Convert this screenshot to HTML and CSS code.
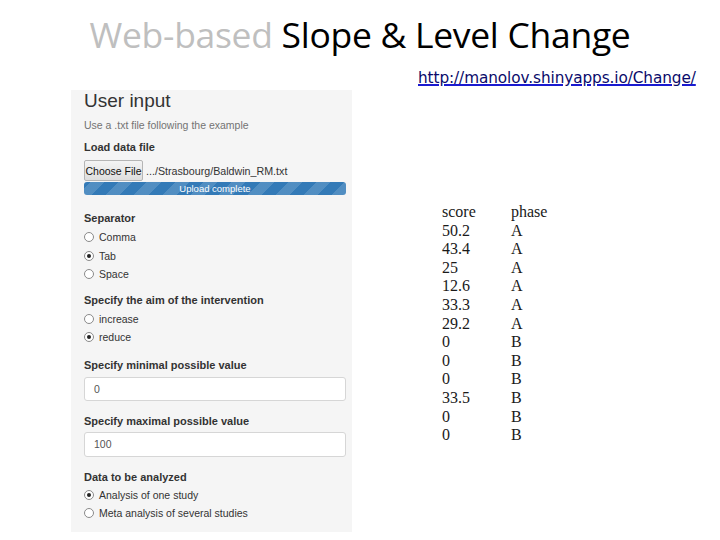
FILE: index.html
```html
<!DOCTYPE html>
<html>
<head>
<meta charset="utf-8">
<link rel="stylesheet" href="styles.css">
</head>
<body>
<div class="slide">
  <h1 class="title"><span class="muted">Web-based</span> Slope &amp; Level Change</h1>
  <div class="content">
    <div class="panel">
      <h2 class="panel-title">User input</h2>
      <p class="help">Use a .txt file following the example</p>
      <div class="label lbl-load">Load data file</div>
      <div class="file-row">
        <span class="file-btn">Choose File</span>
        <span class="file-name">.../Strasbourg/Baldwin_RM.txt</span>
      </div>
      <div class="progress">Upload complete</div>

      <div class="label lbl-sep">Separator</div>
      <div class="radios">
        <div class="radio"><span class="dot"></span>Comma</div>
        <div class="radio"><span class="dot on"></span>Tab</div>
        <div class="radio"><span class="dot"></span>Space</div>
      </div>

      <div class="label lbl-aim">Specify the aim of the intervention</div>
      <div class="radios">
        <div class="radio"><span class="dot"></span>increase</div>
        <div class="radio"><span class="dot on"></span>reduce</div>
      </div>

      <div class="label lbl-min">Specify minimal possible value</div>
      <div class="input in-min">0</div>

      <div class="label lbl-max">Specify maximal possible value</div>
      <div class="input in-max">100</div>

      <div class="label lbl-data">Data to be analyzed</div>
      <div class="radios radios-data">
        <div class="radio"><span class="dot on"></span>Analysis of one study</div>
        <div class="radio"><span class="dot"></span>Meta analysis of several studies</div>
      </div>
    </div>

    <div class="side">
      <a class="link" href="#">http://manolov.shinyapps.io/Change/</a>
      <table class="data">
        <tr><th>score</th><th>phase</th></tr>
        <tr><td>50.2</td><td>A</td></tr>
        <tr><td>43.4</td><td>A</td></tr>
        <tr><td>25</td><td>A</td></tr>
        <tr><td>12.6</td><td>A</td></tr>
        <tr><td>33.3</td><td>A</td></tr>
        <tr><td>29.2</td><td>A</td></tr>
        <tr><td>0</td><td>B</td></tr>
        <tr><td>0</td><td>B</td></tr>
        <tr><td>0</td><td>B</td></tr>
        <tr><td>33.5</td><td>B</td></tr>
        <tr><td>0</td><td>B</td></tr>
        <tr><td>0</td><td>B</td></tr>
      </table>
    </div>
  </div>
</div>
</body>
</html>
```

FILE: styles.css
```css
* { box-sizing: border-box; }
html, body { margin: 0; padding: 0; background: #fff; }
.slide {
  width: 720px;
  height: 540px;
  overflow: hidden;
  position: relative;
}
.title {
  margin: 0;
  padding-top: 10px;
  height: 64px;
  text-align: center;
  font-family: "Open Sans", sans-serif;
  font-weight: 400;
  font-size: 35.5px;
  line-height: 48px;
  color: #000;
  letter-spacing: -0.3px;
}
.muted { color: #bfbfbf; }

.content {
  display: flex;
  align-items: flex-start;
}
.panel {
  margin-left: 71px;
  margin-top: 26px;
  width: 281px;
  background: #f5f5f5;
  padding: 0 6px 9px 13px;
  font-family: "Liberation Sans", Arial, sans-serif;
  color: #333;
}
.panel-title {
  margin: 0;
  font-weight: 400;
  font-size: 19px;
  line-height: 22px;
  color: #333;
}
.help {
  margin: 6px 0 0;
  font-size: 10.5px;
  line-height: 14px;
  color: #737373;
}
.label {
  font-weight: 700;
  font-size: 11px;
  line-height: 14px;
  color: #333;
}
.lbl-load { margin-top: 8px; }
.file-row {
  margin-top: 5px;
  height: 23px;
  display: flex;
  align-items: center;
  font-size: 11px;
}
.file-btn {
  height: 21px;
  width: 59px;
  display: flex;
  align-items: center;
  justify-content: center;
  border: 1px solid #b5b5b5;
  border-radius: 2px;
  background: linear-gradient(#f4f4f4, #dedede);
  color: #111;
  font-size: 10.5px;
}
.file-name {
  margin-left: 3px;
  color: #333;
  font-size: 10.7px;
}
.progress {
  height: 13px;
  border-radius: 3px;
  background-color: #337ab7;
  background-image: repeating-linear-gradient(-45deg,
    rgba(255,255,255,0.15) 0, rgba(255,255,255,0.15) 10px,
    transparent 10px, transparent 20px);
  color: #fff;
  text-align: center;
  font-size: 9.5px;
  line-height: 13px;
}
.lbl-sep { margin-top: 16px; }
.lbl-aim { margin-top: 9px; }
.lbl-min { margin-top: 11px; }
.lbl-max { margin-top: 13px; }
.lbl-data { margin-top: 13px; }
.radios { margin-top: 3px; }
.radios-data { margin-top: 2px; }
.radio {
  display: flex;
  align-items: center;
  height: 18.5px;
  font-size: 10.5px;
  color: #333;
}
.dot {
  width: 10px;
  height: 10px;
  border-radius: 50%;
  border: 1px solid #8a8a8a;
  background: #fff;
  margin-right: 5px;
  position: relative;
  flex: none;
}
.dot.on::after {
  content: "";
  position: absolute;
  left: 2px;
  top: 2px;
  width: 4px;
  height: 4px;
  border-radius: 50%;
  background: #222;
}
.input {
  background: #fff;
  border: 1px solid #d6d6d6;
  border-radius: 3px;
  padding-left: 9px;
  display: flex;
  align-items: center;
  font-size: 10.5px;
  color: #555;
}
.in-min { margin-top: 5px; height: 24px; }
.in-max { margin-top: 4px; height: 25px; }

.side {
  margin-left: 66px;
  margin-top: 5px;
  display: flex;
  flex-direction: column;
}
.link {
  font-family: "DejaVu Sans", Verdana, sans-serif;
  font-size: 15.3px;
  line-height: 19px;
  color: #0a0a6a;
  text-decoration: underline;
  text-decoration-color: #1a1ad0;
  text-decoration-thickness: 2px;
  letter-spacing: -0.1px;
}
.data {
  margin-top: 115px;
  margin-left: 24px;
  border-collapse: collapse;
  font-family: "Liberation Serif", "Times New Roman", serif;
  font-size: 16px;
  color: #1a1a1a;
}
.data th, .data td {
  padding: 0;
  height: 18.6px;
  line-height: 18.6px;
  text-align: left;
  font-weight: 400;
}
.data th:first-child, .data td:first-child { width: 69px; }
```
